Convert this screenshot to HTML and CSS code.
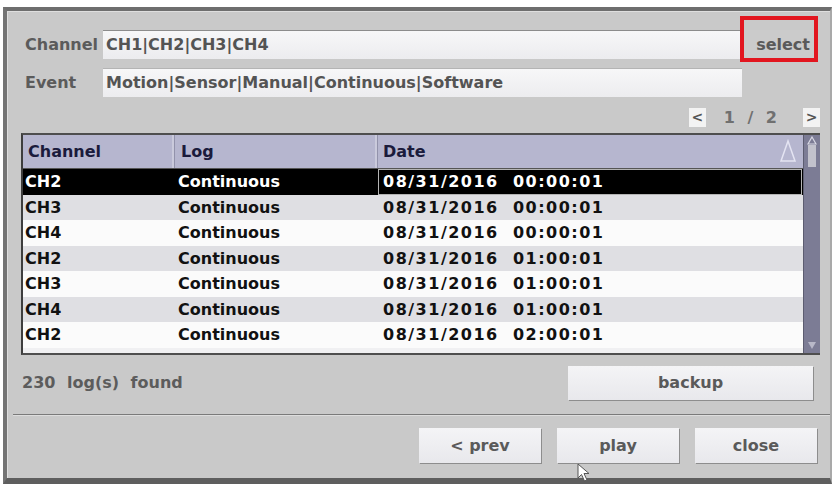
FILE: index.html
```html
<!DOCTYPE html>
<html lang="en">
<head>
    <meta charset="UTF-8">
    <meta name="viewport" content="width=device-width, initial-scale=1.0">
    <title>Log Search</title>
    <link rel="stylesheet" href="styles.css">
</head>
<body>
    <div class="dialog">
        <div class="field-row">
            <span class="field-label">Channel</span>
            <div class="field-value channel-value">CH1|CH2|CH3|CH4</div>
            <button class="select-btn">select</button>
        </div>
        <div class="field-row event-row">
            <span class="field-label">Event</span>
            <div class="field-value event-value">Motion|Sensor|Manual|Continuous|Software</div>
        </div>

        <div class="pager">
            <span class="page-btn">&lt;</span>
            <span class="page-num">1 / 2</span>
            <span class="page-btn">&gt;</span>
        </div>

        <div class="log-list">
            <div class="log-table">
                <div class="log-row log-head">
                    <div class="cell">Channel</div>
                    <div class="cell">Log</div>
                    <div class="cell date-cell">Date<svg class="sort-icon" width="18" height="24" viewBox="0 0 18 24"><path d="M9 2 L16 22 L2 22 Z" fill="none" stroke="#e4e4f2" stroke-width="1.5"/></svg></div>
                </div>
                <div class="log-row selected">
                    <div class="cell">CH2</div>
                    <div class="cell">Continuous</div>
                    <div class="cell date-cell">08/31/2016  00:00:01</div>
                </div>
                <div class="log-row odd">
                    <div class="cell">CH3</div>
                    <div class="cell">Continuous</div>
                    <div class="cell date-cell">08/31/2016  00:00:01</div>
                </div>
                <div class="log-row">
                    <div class="cell">CH4</div>
                    <div class="cell">Continuous</div>
                    <div class="cell date-cell">08/31/2016  00:00:01</div>
                </div>
                <div class="log-row odd">
                    <div class="cell">CH2</div>
                    <div class="cell">Continuous</div>
                    <div class="cell date-cell">08/31/2016  01:00:01</div>
                </div>
                <div class="log-row">
                    <div class="cell">CH3</div>
                    <div class="cell">Continuous</div>
                    <div class="cell date-cell">08/31/2016  01:00:01</div>
                </div>
                <div class="log-row odd">
                    <div class="cell">CH4</div>
                    <div class="cell">Continuous</div>
                    <div class="cell date-cell">08/31/2016  01:00:01</div>
                </div>
                <div class="log-row">
                    <div class="cell">CH2</div>
                    <div class="cell">Continuous</div>
                    <div class="cell date-cell">08/31/2016  02:00:01</div>
                </div>
            </div>
            <div class="scrollbar">
                <svg class="scroll-up" width="10" height="9" viewBox="0 0 10 9">
                    <path d="M5 1 L9 8 L1 8 Z" fill="none" stroke="#d8d8e4" stroke-width="1.2"/>
                </svg>
                <div class="scroll-thumb"></div>
                <svg class="scroll-down" width="10" height="9" viewBox="0 0 10 9">
                    <path d="M1 1 L9 1 L5 8 Z" fill="#b8b8c8"/>
                </svg>
            </div>
        </div>

        <div class="summary">
            <span class="count">230 log(s) found</span>
            <button class="btn backup-btn">backup</button>
        </div>

        <div class="separator"></div>

        <div class="actions">
            <button class="btn">&lt; prev</button>
            <button class="btn">play</button>
            <button class="btn">close</button>
        </div>

        <!-- mouse pointer caught in the capture -->
        <svg class="cursor" width="14" height="20" viewBox="0 0 14 20">
            <path d="M1 1 L1 15 L4.5 11.5 L7.5 18 L10 17 L7 10.5 L12 10.5 Z" fill="#ffffff" stroke="#555" stroke-width="1"/>
        </svg>
    </div>
</body>
</html>
```

FILE: styles.css
```css
body {
    margin: 0;
    padding: 0;
    background: #ffffff;
    font-family: "DejaVu Sans", Verdana, sans-serif;
    font-weight: bold;
    font-size: 16px;
}

button {
    font: inherit;
    cursor: pointer;
}

.dialog {
    position: relative;
    box-sizing: border-box;
    width: 829px;
    height: 477px;
    margin: 7px 0 0 3px;
    background: #c9c9c9;
    border-top: 4px solid #6e6e6e;
    border-left: 4px solid #747474;
    border-right: 2px solid #a9a9a9;
    border-bottom: 6px solid #5e5e5e;
    box-shadow: inset 1px 1px 0 #dedede;
    display: flex;
    flex-direction: column;
}

/* Channel / Event filters */
.field-row {
    display: flex;
    height: 29px;
    margin-top: 19px;
}

.event-row {
    margin-top: 9px;
}

.field-label {
    width: 78px;
    padding-left: 18px;
    line-height: 29px;
    color: #5b5b5b;
}

.field-value {
    box-sizing: border-box;
    padding-left: 3px;
    line-height: 28px;
    color: #545454;
    background: linear-gradient(#f7f7f8, #ececef);
    border-top: 1px solid #8c8c8c;
}

.channel-value {
    width: 637px;
}

.event-value {
    width: 639px;
    border-top-color: #b4b4b4;
}

.select-btn {
    position: relative;
    width: 78px;
    padding: 0 8px 0 0;
    text-align: right;
    color: #5a5a5a;
    background: #cbcbcb;
    border: none;
}

.select-btn::after {
    content: '';
    position: absolute;
    top: -14px;
    bottom: -3px;
    left: 0;
    right: 0;
    border: 4px solid #e2161f;
}

/* Page switcher */
.pager {
    display: flex;
    justify-content: flex-end;
    align-items: center;
    height: 20px;
    margin-top: 10px;
    padding-right: 10px;
}

.page-btn {
    width: 17px;
    height: 19px;
    line-height: 19px;
    text-align: center;
    font-size: 14px;
    color: #555;
    background: #f3f3f3;
}

.page-num {
    margin: 0 26px 0 18px;
    word-spacing: 7px;
    color: #707070;
}

/* Log table */
.log-list {
    display: flex;
    margin: 6px 10px 0 14px;
    border-top: 2px solid #4e4e4e;
    border-bottom: 2px solid #4e4e4e;
    border-left: 2px solid #3e3e3e;
    background: #f0f0f2;
}

.log-table {
    flex: 1;
    padding-bottom: 5px;
}

.log-row {
    display: grid;
    grid-template-columns: 152px 203px 1fr;
    height: 25.5px;
    line-height: 25.5px;
    color: #111;
    background: #fbfbfb;
}

.log-row.odd {
    background: #dfdfe3;
}

.log-row .cell {
    padding-left: 2px;
    white-space: pre;
}

.log-row .cell:nth-child(2) {
    padding-left: 3px;
}

.log-row .date-cell {
    padding-left: 5px;
    letter-spacing: 1.5px;
}

.log-head {
    height: 33px;
    line-height: 33px;
    color: #1b1b3c;
    background: #b6b6cf;
    border-bottom: 1px solid #555;
}

.log-head .cell {
    position: relative;
    padding-left: 5px;
    white-space: nowrap;
    border-right: 1px solid #9292ab;
    box-shadow: inset -2px 0 0 #cacadc;
}

.log-head .cell:nth-child(2) {
    padding-left: 6px;
}

.log-head .date-cell {
    letter-spacing: 0;
    border-right: none;
    box-shadow: none;
}

.sort-icon {
    position: absolute;
    right: 6px;
    top: 4px;
}

.log-row.selected {
    background: #000;
    color: #fff;
}

.log-row.selected .date-cell {
    box-shadow: inset 0 0 0 1px #b4b4b4;
    margin-right: 1px;
}

.scrollbar {
    position: relative;
    width: 16px;
    background: #7c7c95;
    border-left: 1px solid #5c5c70;
}

.scroll-up {
    position: absolute;
    top: 1px;
    left: 3px;
}

.scroll-thumb {
    position: absolute;
    top: 10px;
    left: 4px;
    width: 8px;
    height: 22px;
    background: #c2c2cc;
}

.scroll-down {
    position: absolute;
    bottom: 3px;
    left: 3px;
}

/* Result count and backup */
.summary {
    display: flex;
    justify-content: space-between;
    align-items: center;
    height: 34px;
    margin-top: 11px;
    padding: 0 17px 0 15px;
}

.count {
    color: #5c5c5c;
    word-spacing: 6px;
}

.btn {
    width: 122px;
    height: 35px;
    padding: 0;
    color: #5a5a5a;
    background: linear-gradient(#f4f4f6, #e8e8ec);
    border: none;
    box-shadow: 1px 1px 0 #8d8d8d;
}

.backup-btn {
    width: 245px;
    height: 34px;
}

.separator {
    height: 1px;
    margin: 14px 0 0 6px;
    background: #7a7a7a;
    border-bottom: 1px solid #dddddd;
}

.actions {
    display: flex;
    justify-content: flex-end;
    gap: 16px;
    margin-top: 12px;
    padding-right: 13px;
}

.cursor {
    position: absolute;
    left: 570px;
    top: 452px;
}
```
